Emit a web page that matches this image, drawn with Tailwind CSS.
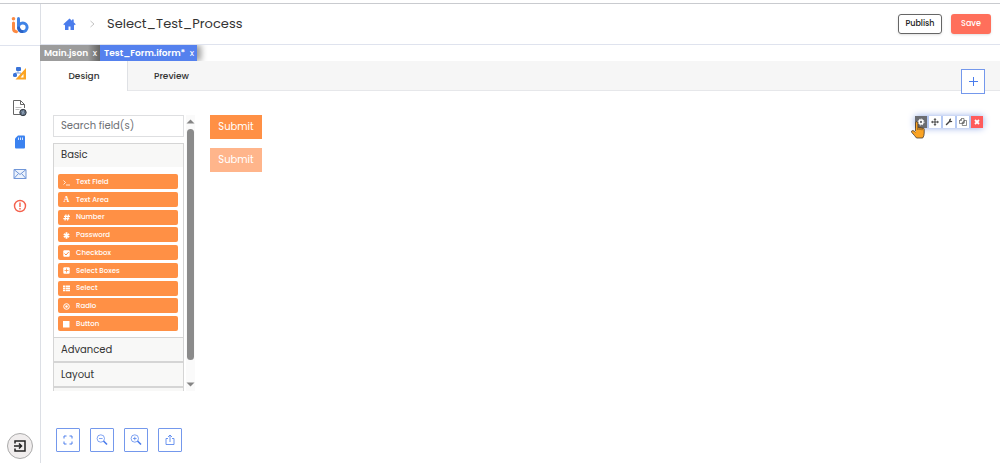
<!DOCTYPE html>
<html lang="en">
  <head>
    <meta charset="UTF-8" />
    <meta name="viewport" content="width=device-width, initial-scale=1.0" />
    <title>Select_Test_Process</title>
    <script src="https://cdn.jsdelivr.net/npm/@tailwindcss/browser@4"></script>
  </head>
  <body class="flex min-h-screen flex-col bg-white pt-[3px] font-['Poppins','Inter',sans-serif] text-[#333]">
    <div class="flex flex-1 border-t border-[#c9cbcf]">
      <!-- Sidebar -->
      <aside class="flex w-[41px] shrink-0 flex-col items-center border-r border-[#dcdfe5] pb-1">
        <a href="#" aria-label="Home page" class="flex h-[42px] w-full items-center justify-center border-b border-[#dfe3ee]">
          <svg class="h-[18px] w-[18px]" viewBox="0 0 18 18" fill="none" stroke-linecap="round">
            <circle cx="2.5" cy="2.8" r="1.8" fill="#fd8a42" />
            <path d="M2.5 7v5.5q0 3 3 3.2" stroke="#fd8a42" stroke-width="3" />
            <path d="M7.5 2.5v8.5" stroke="#3f83e6" stroke-width="3" />
            <circle cx="11.8" cy="11.3" r="4.3" stroke="#3f83e6" stroke-width="3" />
            <path d="M7.6 12q.5 3 3.4 3.6" stroke="#2c62c4" stroke-width="3" />
          </svg>
        </a>
        <nav class="mt-5 flex flex-col items-center gap-[17px]">
          <a href="#" aria-label="Processes">
            <svg class="h-4 w-4" viewBox="0 0 16 16">
              <path d="M6 4v3M3 9V7h6v2" fill="none" stroke="#8ba9df" />
              <rect x="4" y="1" width="5" height="4" rx="1" fill="#3b74d8" />
              <rect x="1" y="7" width="4" height="4" rx="1.500" fill="#3b74d8" />
              <path d="M14 2v11.500H3.500z" fill="#fba424" />
              <path d="M11.500 8v3.500h-3z" fill="#fff" />
            </svg>
          </a>
          <a href="#" aria-label="Documents">
            <svg class="h-[18px] w-4" viewBox="0 0 16 18" fill="none" stroke="#666">
              <path d="M8.500 15.500h-7v-14h7l4 4V9M8.500 1.500v4h4" />
              <path d="M3.500 8.500h6M3.500 10.500h4" stroke="#bbb" />
              <circle cx="11" cy="13.500" r="3.200" fill="#5b6c80" stroke="#3a4048" />
              <path d="M9.500 12.500l3 2M11.500 11.500l-1 4" stroke="#9fb2c8" stroke-width=".8" />
            </svg>
          </a>
          <a href="#" aria-label="Storage">
            <svg class="h-4 w-4" viewBox="0 0 16 16">
              <path d="M6 1.500h6q1 0 1 1v11q0 1-1 1H4q-1 0-1-1v-9z" fill="#3b82f0" />
              <path d="M6.500 3.500v2.500M8.500 3.500v2.500M10.500 3.500v2.500" stroke="#fff" stroke-width=".8" />
            </svg>
          </a>
          <a href="#" aria-label="Mail">
            <svg class="h-[14px] w-4" viewBox="0 0 16 14" fill="#edf3fc" stroke="#7096d8">
              <path d="M2 2.500h12v9H2z" />
              <path d="M2 2.500l6 5 6-5M2 11.500l4.500-5M14 11.500l-4.500-5" fill="none" />
            </svg>
          </a>
          <a href="#" aria-label="Errors">
            <svg class="h-4 w-4" viewBox="0 0 16 16" fill="none" stroke="#f4604c" stroke-width="1.400">
              <circle cx="8" cy="8" r="5.500" />
              <path d="M8 4.500v4.500M8 10v1.500" />
            </svg>
          </a>
        </nav>
        <button aria-label="Exit" class="mt-auto flex h-[26px] w-[26px] items-center justify-center rounded-full border border-[#aaa] bg-[#f0eded]">
          <svg class="h-[14px] w-[14px]" viewBox="0 0 14 14" fill="none" stroke="#222" stroke-width="1.500">
            <path d="M2 4.500V2h10v10H2V9.500M1 7h7.500M6 4.500L8.500 7 6 9.500" />
          </svg>
        </button>
      </aside>

      <main class="flex min-w-0 flex-1 flex-col">
        <!-- Header -->
        <header class="flex h-[41px] items-center border-b border-[#dfe3ee] pr-[9px] pl-[22px]">
          <a href="#" aria-label="Home">
            <svg class="h-[13px] w-[13px]" viewBox="0 0 13 13" fill="#4a7cec">
              <path d="M6.500.5L.3 6.200l.9 1L2 6.500V12h3.500V8.500h2V12H11V6.500l.8.7.9-1-2-1.900V1.500H9v1.300z" />
            </svg>
          </a>
          <svg class="ml-[11px] h-3 w-3" viewBox="0 0 12 12" fill="none" stroke="#c4c4c4"><path d="M3.500 3L7 6 3.500 9" /></svg>
          <h1 class="ml-2 text-[13px] whitespace-nowrap">Select_Test_Process</h1>
          <button class="ml-auto h-5 w-11 rounded-[3px] border border-[#666] text-[8px] font-medium text-[#222] shadow-sm">Publish</button>
          <button class="ml-[9px] h-5 w-10 rounded-[3px] bg-[#ff6f5b] text-[8px] font-medium text-white shadow-sm">Save</button>
        </header>

        <!-- Open files -->
        <div class="-ml-px flex h-4 text-[9px] font-semibold text-white">
          <div class="flex w-[60px] items-center justify-between bg-linear-to-r from-[#9c9c9c] from-80% to-[#666] pt-px pr-[3px] pl-1">
            Main.json <button aria-label="Close Main.json" class="font-normal">x</button>
          </div>
          <div class="flex w-[97px] items-center justify-between bg-[#5581ee] pt-px pr-[3px] pl-1 shadow-[4px_0_6px_#0006] [clip-path:inset(0_-12px_0_0)]">
            Test_Form.iform* <button aria-label="Close Test_Form.iform" class="font-normal">x</button>
          </div>
        </div>

        <!-- View tabs -->
        <div class="relative flex h-[30px] border-b border-[#e6e7ea] bg-[#f6f6f6] text-[9px] font-medium">
          <button class="-mb-px w-[87px] border-r border-[#dfe1e5] bg-white pt-px">Design</button>
          <button class="w-[87px] pt-[2px]">Preview</button>
          <button aria-label="Add" class="absolute top-2 right-[15px] flex h-[25px] w-6 items-center justify-center border border-[#7498ec] bg-white">
            <svg class="h-[11px] w-[11px]" viewBox="0 0 11 11" stroke="#4a7cec"><path d="M5.500 1v9M1 5.500h9" /></svg>
          </button>
        </div>

        <!-- Form builder -->
        <div class="flex flex-1 pt-6 pr-[17px] pl-3">
          <section class="flex flex-col">
            <div class="flex h-[276px] gap-[2px] overflow-hidden">
              <div class="w-[131px]">
                <input type="search" aria-label="Search fields" placeholder="Search field(s)" class="mb-[6px] block h-[22px] w-full border border-[#dedfe1] px-[7px] pb-px text-[10px] placeholder:text-[#6d7074]" />
                <div class="border border-[#d5d5d5] text-[10px]">
                  <h2 class="flex h-[23px] items-center bg-[#f8f8f7] px-[7px] pb-[2px]">Basic</h2>
                  <div class="flex h-[170px] flex-col justify-between pt-[7px] pr-[5px] pb-[6px] pl-1 text-[7px] font-medium text-white">
                    <button class="flex h-[15px] items-center gap-[6px] rounded-[2px] bg-[#ff9045] px-[5px] pt-px">
                      <svg class="h-[7px] w-[7px]" viewBox="0 0 7 7" fill="none" stroke="#fff"><path d="M.5 1.500l2 2-2 2M3 6h4" stroke-width=".8" /></svg>
                      Text Field
                    </button>
                    <button class="flex h-[15px] items-center gap-[6px] rounded-[2px] bg-[#ff9045] px-[5px] pt-px">
                      <span class="w-[7px] font-['Liberation_Serif',serif] text-[8px] font-bold">A</span>
                      Text Area
                    </button>
                    <button class="flex h-[15px] items-center gap-[6px] rounded-[2px] bg-[#ff9045] px-[5px] pt-px">
                      <svg class="h-[7px] w-[7px]" viewBox="0 0 7 7" stroke="#fff" stroke-width="1.300"><path d="M3 .5l-1 6M5.500.5l-1 6M1 2.300h6M.3 4.700h6" /></svg>
                      Number
                    </button>
                    <button class="flex h-[15px] items-center gap-[6px] rounded-[2px] bg-[#ff9045] px-[5px] pt-px">
                      <svg class="h-[7px] w-[7px]" viewBox="0 0 7 7" stroke="#fff" stroke-width="1.800"><path d="M3.500.3v6.400M.8 1.900l5.400 3.200M.8 5.100l5.400-3.200" /></svg>
                      Password
                    </button>
                    <button class="flex h-[15px] items-center gap-[6px] rounded-[2px] bg-[#ff9045] px-[5px] pt-px">
                      <svg class="h-[7px] w-[7px]" viewBox="0 0 7 7"><rect x=".3" y=".3" width="6.400" height="6.400" rx="1" fill="#fff" /><path d="M1.500 3.500L3 5l2.700-3" fill="none" stroke="#ff9045" /></svg>
                      Checkbox
                    </button>
                    <button class="flex h-[15px] items-center gap-[6px] rounded-[2px] bg-[#ff9045] px-[5px] pt-px">
                      <svg class="h-[7px] w-[7px]" viewBox="0 0 7 7"><rect x=".3" y=".3" width="6.400" height="6.400" rx="1" fill="#fff" /><path d="M3.500 1.500v4M1.500 3.500h4" stroke="#ff9045" stroke-width=".8" /></svg>
                      Select Boxes
                    </button>
                    <button class="flex h-[15px] items-center gap-[6px] rounded-[2px] bg-[#ff9045] px-[5px] pt-px">
                      <svg class="h-[7px] w-[7px]" viewBox="0 0 7 7" stroke="#fff" stroke-width="1.600"><path d="M0 1.200h2M2.500 1.200H7M0 3.300h2M2.500 3.300H7M0 5.400h2M2.500 5.400H7" /></svg>
                      Select
                    </button>
                    <button class="flex h-[15px] items-center gap-[6px] rounded-[2px] bg-[#ff9045] px-[5px] pt-px">
                      <svg class="h-[7px] w-[7px]" viewBox="0 0 7 7"><circle cx="3.500" cy="3.500" r="2.800" fill="none" stroke="#fff" /><circle cx="3.500" cy="3.500" r="1.200" fill="#fff" /></svg>
                      Radio
                    </button>
                    <button class="flex h-[15px] items-center gap-[6px] rounded-[2px] bg-[#ff9045] px-[5px] pt-px">
                      <svg class="h-[7px] w-[7px]" viewBox="0 0 7 7"><rect width="6.500" height="6.500" fill="#fff" /></svg>
                      Button
                    </button>
                  </div>
                </div>
                <h2 class="flex h-[25px] items-center border-x border-b-2 border-[#d5d5d5] bg-[#f8f8f7] px-[7px] pb-px text-[10px]">Advanced</h2>
                <h2 class="flex h-[25px] items-center border-x border-b-2 border-[#d5d5d5] bg-[#f8f8f7] px-[7px] pb-px text-[10px]">Layout</h2>
                <div class="h-[25px] border-x border-[#d5d5d5] bg-[#f8f8f7]"></div>
              </div>
              <!-- Scrollbar -->
              <div class="flex w-[9px] flex-col items-center bg-[#fafafa] py-1">
                <svg class="h-[5px] w-[9px]" viewBox="0 0 9 5" fill="#858585"><path d="M4.500.5L8.500 4.500H.5z" /></svg>
                <div class="mt-[5px] h-[231px] w-[7px] rounded-full bg-[#8b8b8b]"></div>
                <svg class="mt-auto h-[5px] w-[9px]" viewBox="0 0 9 5" fill="#858585"><path d="M4.500 4.500L8.500.5H.5z" /></svg>
              </div>
            </div>

            <div class="mt-auto flex gap-[10px] pb-[11px] pl-[3px] text-[#4a7cec]">
              <button aria-label="Full screen" class="flex h-6 w-6 items-center justify-center rounded-[1px] border border-[#7498ec]">
                <svg class="h-[10px] w-[10px]" viewBox="0 0 10 10" fill="none" stroke="currentColor"><path d="M1 3.500V1h2.500M6.500 1H9v2.500M9 6.500V9H6.500M3.500 9H1V6.500" /></svg>
              </button>
              <button aria-label="Zoom out" class="flex h-6 w-6 items-center justify-center rounded-[1px] border border-[#7498ec]">
                <svg class="h-3 w-3" viewBox="0 0 12 12" fill="none" stroke="currentColor" stroke-width=".7"><circle cx="4.800" cy="4.500" r="3.700" /><path d="M3 4.500h3.600" /><path d="M7.500 7l3.500 3.500" stroke-width="1.600" /></svg>
              </button>
              <button aria-label="Zoom in" class="flex h-6 w-6 items-center justify-center rounded-[1px] border border-[#7498ec]">
                <svg class="h-3 w-3" viewBox="0 0 12 12" fill="none" stroke="currentColor" stroke-width=".7"><circle cx="4.800" cy="4.500" r="3.700" /><path d="M3 4.500h3.600M4.800 2.700v3.600" /><path d="M7.500 7l3.500 3.500" stroke-width="1.600" /></svg>
              </button>
              <button aria-label="Share" class="flex h-6 w-6 items-center justify-center rounded-[1px] border border-[#7498ec]">
                <svg class="h-3 w-3" viewBox="0 0 12 12" fill="none" stroke="currentColor" stroke-width=".8"><path d="M4 4.500H2v6h8v-6H8M6 8V1M4 3l2-2 2 2" /></svg>
              </button>
            </div>
          </section>

          <!-- Canvas -->
          <section class="ml-[15px] flex flex-1 items-start justify-between">
            <div class="flex flex-col gap-[9px] text-[10px] text-white">
              <button class="h-6 w-[52px] bg-[#ff9045] pb-[2px]">Submit</button>
              <button class="h-6 w-[52px] bg-[#ffb58b] pb-[2px]">Submit</button>
            </div>
            <div class="relative mt-px flex gap-[2px] bg-[#b4c8f2] text-[#444] shadow-[0_0_7px_#8fa9e6]">
              <button aria-label="Settings" class="flex h-3 w-3 items-center justify-center bg-[#6b6d72]">
                <svg class="h-2 w-2" viewBox="0 0 8 8" fill="none" stroke="#fff"><circle cx="4" cy="4" r="1.900" stroke-width="1.500" /><circle cx="4" cy="4" r="3" stroke-width="1" stroke-dasharray="1.200 1.156" /></svg>
              </button>
              <button aria-label="Move" class="flex h-3 w-3 items-center justify-center bg-white">
                <svg class="h-2 w-2" viewBox="0 0 8 8" fill="currentColor"><path d="M4 0l1.500 1.700h-1v1.800h1.800v-1L8 4 6.300 5.500v-1H4.500v1.800h1L4 8 2.500 6.300h1V4.500H1.700v1L0 4l1.700-1.500v1h1.800V1.700h-1z" /></svg>
              </button>
              <button aria-label="Edit JSON" class="flex h-3 w-3 items-center justify-center bg-white">
                <svg class="h-2 w-2" viewBox="0 0 8 8" fill="none" stroke="currentColor"><path d="M1.500 6.500l3.500-3.500" stroke-width="1.500" stroke-linecap="round" /><path d="M6 1.200a1.200 1.200 0 1 0 .9 1.900" stroke-width="1.300" /></svg>
              </button>
              <button aria-label="Copy" class="flex h-3 w-3 items-center justify-center bg-white">
                <svg class="h-2 w-2" viewBox="0 0 8 8" fill="#fff" stroke="currentColor" stroke-width=".6"><path d="M2.500.5H5v5H.5v-3zM2.500.5v2h-2M5.200 2.500h2.300v5H3.300v-3zM5.200 2.500v2H3.300" /></svg>
              </button>
              <button aria-label="Remove" class="flex h-3 w-3 items-center justify-center bg-[#ff5c5c]">
                <svg class="h-[6px] w-[6px]" viewBox="0 0 6 6" stroke="#fff" stroke-width="1.800"><path d="M1 1l4 4M5 1L1 5" /></svg>
              </button>
              <!-- Hand pointer -->
              <svg class="absolute top-[5px] -left-1 h-[18px] w-[14px]" viewBox="0 0 14 18" fill="#fba424" stroke="#473b31" stroke-width=".8" stroke-linejoin="round">
                <path d="M4.500 10V2q0-1.300 1.200-1.300T6.900 2v4.500q1.100-.8 2.100.2 1-.8 2 .3 1.900-.5 2.200 1.200v4q0 2.800-1.500 4.800H5.500Q4 15 .8 11.500q-.8-2 .8-2 1.600.2 2.900 1.800M6.900 6.500V9M9 6.700V9M11 7v2.200" />
              </svg>
            </div>
          </section>
        </div>
      </main>
    </div>
  </body>
</html>
